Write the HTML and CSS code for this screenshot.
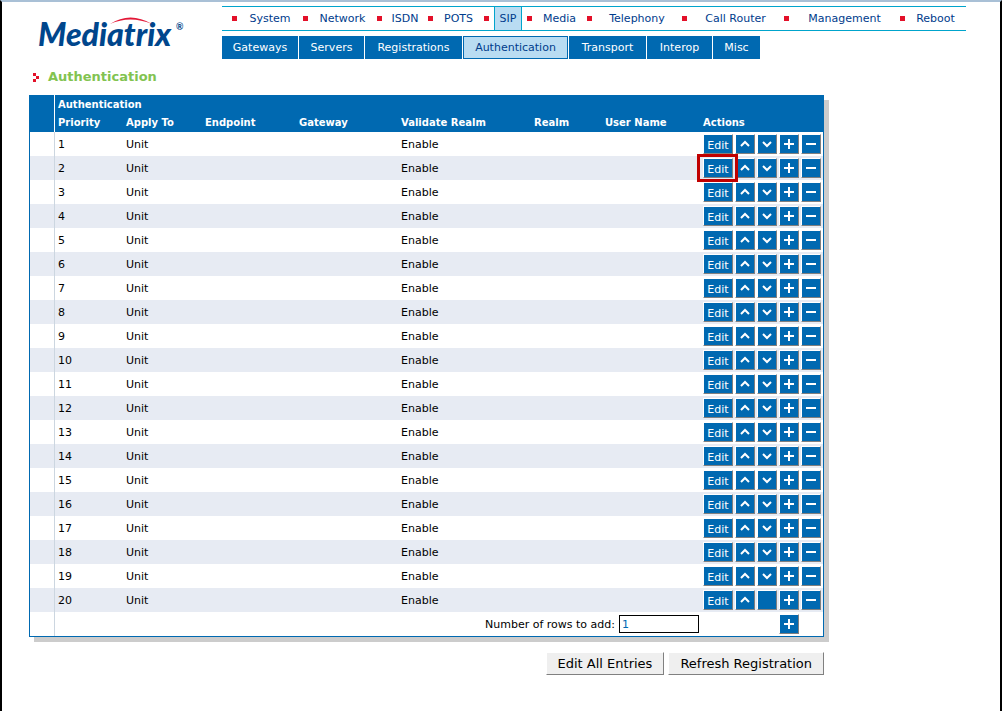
FILE: index.html
```html
<!DOCTYPE html>
<html lang="en">
<head>
<meta charset="utf-8">
<title>Mediatrix - Authentication</title>
<link rel="stylesheet" href="styles.css">
</head>
<body>
<div class="page">
  <header class="header">
    <svg class="logo" viewBox="0 0 160 45" role="img" aria-label="Mediatrix">
      <text class="logo-name" x="8" y="34">Mediatrix</text>
      <path class="logo-arc" d="M80 12Q100 -1 122 12Q100 3 80 12Z"/>
      <text class="logo-mark" x="146" y="18">®</text>
    </svg>
    <div class="navs">
      <nav aria-label="Main">
        <ul class="menu">
          <li><a href="#">System</a></li>
          <li><a href="#">Network</a></li>
          <li><a href="#">ISDN</a></li>
          <li><a href="#">POTS</a></li>
          <li><a href="#" class="current">SIP</a></li>
          <li><a href="#">Media</a></li>
          <li><a href="#">Telephony</a></li>
          <li><a href="#">Call Router</a></li>
          <li><a href="#">Management</a></li>
          <li><a href="#">Reboot</a></li>
        </ul>
      </nav>
      <nav class="tabs" aria-label="SIP">
        <a href="#">Gateways</a>
        <a href="#">Servers</a>
        <a href="#">Registrations</a>
        <a href="#" class="current">Authentication</a>
        <a href="#">Transport</a>
        <a href="#">Interop</a>
        <a href="#">Misc</a>
      </nav>
    </div>
  </header>
  <main class="main">
    <h1 class="title">
      <svg class="title-icon" viewBox="0 0 6 9" aria-hidden="true"><path d="M0 0h3v3H0zM3 3h3v3H3zM0 6h3v3H0z"/></svg>
      Authentication
    </h1>
    <form>
      <table class="grid">
        <colgroup>
          <col class="c-gutter"><col class="c-priority"><col class="c-apply"><col class="c-endpoint"><col class="c-gateway"><col class="c-validate"><col class="c-realm"><col><col class="c-actions">
        </colgroup>
        <thead>
          <tr class="caption-row"><th></th><th colspan="8" scope="colgroup">Authentication</th></tr>
          <tr class="label-row"><th></th><th scope="col">Priority</th><th scope="col">Apply To</th><th scope="col">Endpoint</th><th scope="col">Gateway</th><th scope="col">Validate Realm</th><th scope="col">Realm</th><th scope="col">User Name</th><th scope="col">Actions</th></tr>
        </thead>
        <tbody id="rows"></tbody>
        <tfoot>
          <tr>
            <td></td>
            <td colspan="7"><div class="add"><label for="count">Number of rows to add:</label><input id="count" type="text" value="1"></div></td>
            <td><div class="actions actions-add"><button type="button" class="btn" aria-label="Add rows"><svg viewBox="0 0 12 12"><path d="M6 1v10M1 6h10"/></svg></button></div></td>
          </tr>
        </tfoot>
      </table>
      <div class="footer">
        <button type="button" class="wide">Edit All Entries</button>
        <button type="button" class="wide">Refresh Registration</button>
      </div>
    </form>
  </main>
</div>
<script src="rows.js"></script>
</body>
</html>
```
FILE: styles.css
```css
* { box-sizing: border-box; }

body {
  margin: 0;
  background: #fff;
  color: #000;
  font-family: Verdana, "DejaVu Sans", sans-serif;
  font-size: 11px;
}

.page {
  min-height: 100vh;
  border-top: 2px solid #a9c0d6;
  border-left: 2px solid #000;
  border-right: 2px solid #000;
}

.header {
  display: flex;
  gap: 32px;
  padding: 4px 34px 0 28px;
}

.logo {
  flex: none;
  width: 160px;
  height: 45px;
  margin-top: 6px;
}

.logo-name {
  font: italic 900 32px Lato, sans-serif;
  fill: #00468c;
}

.logo-mark { font: bold 9px Lato, sans-serif; fill: #00468c; }
.logo-arc { fill: #e31837; }

.navs { flex: 1; }

.menu {
  display: grid;
  grid-template-columns: 71fr 74fr 51fr 56fr 43fr 60fr 95fr 102fr 116fr 66fr;
  height: 25px;
  margin: 0;
  padding: 0 0 0 10px;
  list-style: none;
  border-top: 1px solid #00a4cc;
  border-bottom: 1px solid #00a4cc;
}

.menu li {
  display: flex;
  align-items: center;
  min-width: 0;
}

.menu li::before {
  flex: none;
  width: 5px;
  height: 5px;
  background: #e31029;
  content: "";
}

.menu a {
  margin: 0 auto;
  color: #003c8c;
  line-height: 23px;
  text-decoration: none;
}

.menu .current {
  padding: 0 5px;
  background: #b9dcf2;
  border: solid #00a4cc;
  border-width: 0 1px;
}

.tabs {
  display: grid;
  grid-template-columns: 76px 65px 97px 105px 77px 65px 47px;
  gap: 1px;
  margin-top: 5px;
}

.tabs a {
  border: 1px solid #0069b1;
  background: #0069b1;
  color: #fff;
  line-height: 21px;
  text-align: center;
  text-decoration: none;
}

.tabs .current { background: #b9dcf2; color: #003c8c; }

.main { padding: 0 176px 0 27px; }

.title {
  display: flex;
  align-items: center;
  gap: 9px;
  margin: 0;
  padding: 9px 0 9px 4px;
  color: #82c350;
  font-size: 13px;
  line-height: 18px;
}

.title-icon { width: 6px; height: 9px; fill: #e31029; }

.grid {
  width: 100%;
  table-layout: fixed;
  border-spacing: 0;
  border: solid #0069b1;
  border-width: 0 1px 1px;
  background: #fff;
  box-shadow: 5px 5px 0 #ccc;
}

.c-gutter { width: 25px; }
.c-priority { width: 68px; }
.c-apply { width: 79px; }
.c-endpoint { width: 94px; }
.c-gateway { width: 102px; }
.c-validate { width: 133px; }
.c-realm { width: 71px; }
.c-actions { width: 123px; }

.grid th,
.grid td {
  padding: 0 0 0 3px;
  text-align: left;
  white-space: nowrap;
}

.grid th { background: #0069b1; color: #fff; font-size: 10px; }
.grid th:first-child { border-right: 1px solid #fff; }
.grid td:first-child { border-right: 1px solid #ccd6e0; }
.caption-row { height: 18px; }
.label-row { height: 19px; }
tbody tr, tfoot tr { height: 24px; }
tbody tr:nth-child(even) { background: #e7ebf3; }

.actions { display: flex; gap: 2px; }
.actions-add { padding-left: 76px; }

.btn {
  display: flex;
  align-items: center;
  justify-content: center;
  width: 20px;
  height: 20px;
  padding: 0;
  border: 1px solid;
  border-color: #fff #808080 #808080 #fff;
  background: #0069b1;
  color: #fff;
  font: inherit;
}

.btn-edit { width: 30px; padding-top: 2px; }
.btn svg { width: 12px; height: 12px; fill: none; stroke: #fff; stroke-width: 2; }

.marked { position: relative; }

.marked::after {
  position: absolute;
  inset: -5px -6px -5px -7px;
  z-index: 1;
  border: 3px solid #c00000;
  content: "";
}

.add {
  display: flex;
  align-items: center;
  justify-content: flex-end;
  gap: 4px;
  padding-right: 1px;
}

.add input {
  width: 80px;
  height: 18px;
  padding: 0 2px;
  border: 1px solid #000;
  color: #0069b1;
  font: inherit;
}

.footer {
  display: flex;
  justify-content: flex-end;
  gap: 4px;
  padding-top: 15px;
}

.wide {
  height: 23px;
  padding: 0 11px;
  border: 1px solid;
  border-color: #fff #808080 #808080 #fff;
  background: #efefef;
  color: #000;
  font: inherit;
  font-size: 13px;
}
```
FILE: rows.js
```js
const ROW_COUNT = 20;
const MARKED_ROW = 2;

const icons = {
  up: '<svg viewBox="0 0 12 12"><path d="M2 8l4-4 4 4"/></svg>',
  down: '<svg viewBox="0 0 12 12"><path d="M2 4l4 4 4-4"/></svg>',
  add: '<svg viewBox="0 0 12 12"><path d="M6 1v10M1 6h10"/></svg>',
  remove: '<svg viewBox="0 0 12 12"><path d="M1 6h10"/></svg>'
};

function button(label, icon) {
  return `<button type="button" class="btn" aria-label="${label}">${icon}</button>`;
}

let html = '';
for (let i = 1; i <= ROW_COUNT; i++) {
  html += `<tr><td></td><td>${i}</td><td>Unit</td><td></td><td></td><td>Enable</td><td></td><td></td>
    <td><div class="actions">
      <button type="button" class="btn btn-edit${i === MARKED_ROW ? ' marked' : ''}">Edit</button>
      ${button('Move up', icons.up)}${button('Move down', i < ROW_COUNT ? icons.down : '')}
      ${button('Add', icons.add)}${button('Remove', icons.remove)}
    </div></td></tr>`;
}
document.getElementById('rows').innerHTML = html;
```
